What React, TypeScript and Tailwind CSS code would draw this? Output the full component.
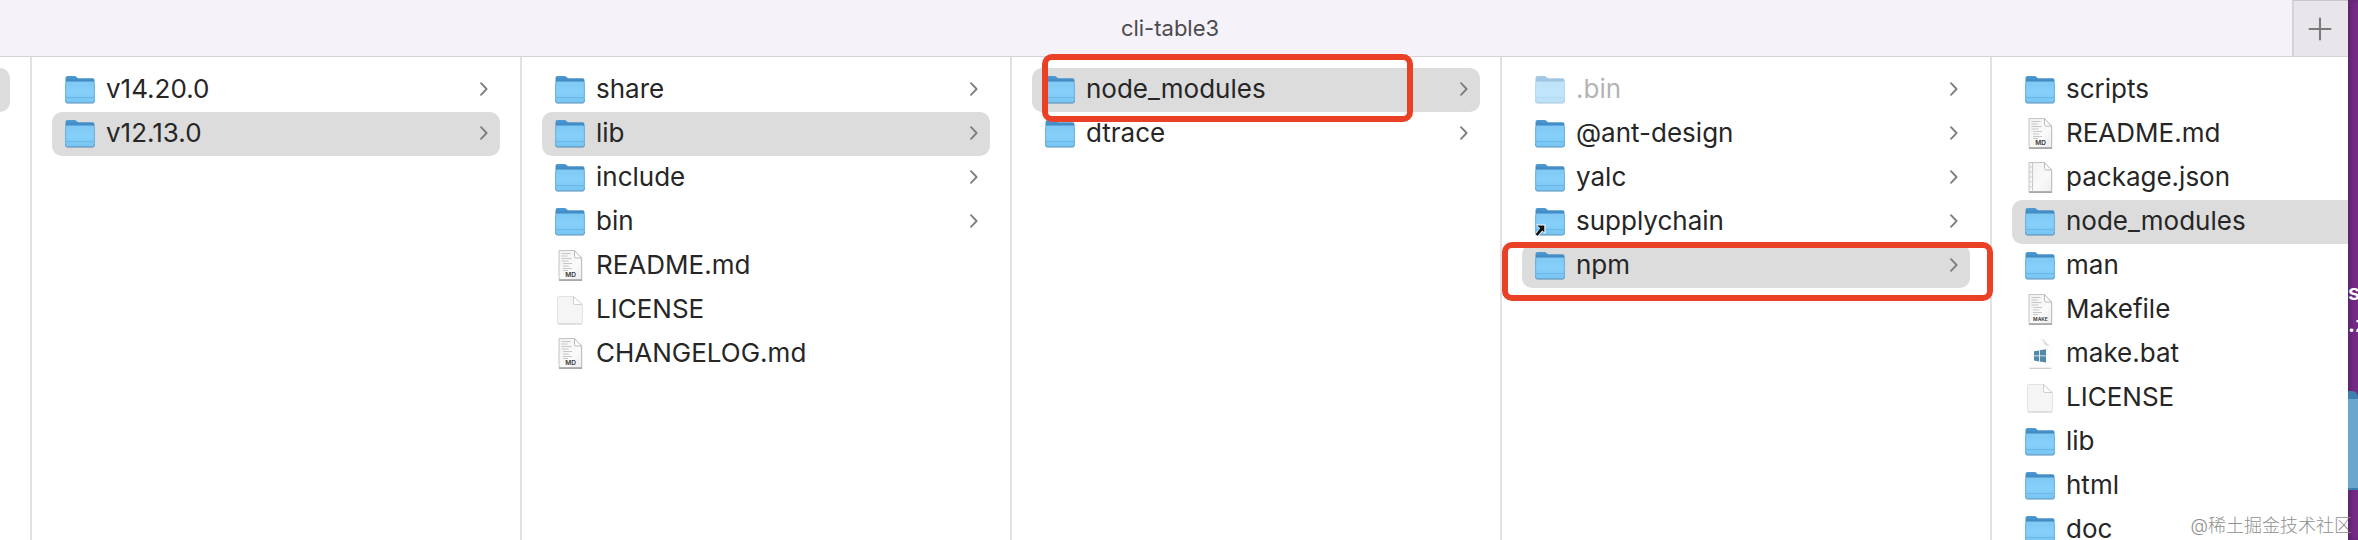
import { Plus } from 'lucide-react';

type IconKind = 'folder' | 'alias' | 'md' | 'make' | 'json' | 'bat' | 'blank';

interface Entry {
  name: string;
  icon: IconKind;
  selected?: boolean;
  hidden?: boolean;
  mark?: 'name' | 'row';
}

const columns: Entry[][] = [
  [
    { name: 'v14.20.0', icon: 'folder' },
    { name: 'v12.13.0', icon: 'folder', selected: true },
  ],
  [
    { name: 'share', icon: 'folder' },
    { name: 'lib', icon: 'folder', selected: true },
    { name: 'include', icon: 'folder' },
    { name: 'bin', icon: 'folder' },
    { name: 'README.md', icon: 'md' },
    { name: 'LICENSE', icon: 'blank' },
    { name: 'CHANGELOG.md', icon: 'md' },
  ],
  [
    { name: 'node_modules', icon: 'folder', selected: true, mark: 'name' },
    { name: 'dtrace', icon: 'folder' },
  ],
  [
    { name: '.bin', icon: 'folder', hidden: true },
    { name: '@ant-design', icon: 'folder' },
    { name: 'yalc', icon: 'folder' },
    { name: 'supplychain', icon: 'alias' },
    { name: 'npm', icon: 'folder', selected: true, mark: 'row' },
  ],
  [
    { name: 'scripts', icon: 'folder' },
    { name: 'README.md', icon: 'md' },
    { name: 'package.json', icon: 'json' },
    { name: 'node_modules', icon: 'folder', selected: true },
    { name: 'man', icon: 'folder' },
    { name: 'Makefile', icon: 'make' },
    { name: 'make.bat', icon: 'bat' },
    { name: 'LICENSE', icon: 'blank' },
    { name: 'lib', icon: 'folder' },
    { name: 'html', icon: 'folder' },
    { name: 'doc', icon: 'folder' },
  ],
];

const markStyles = {
  name: '-top-[14px] -bottom-[10px] left-[10px] right-[67px]',
  row: '-top-[2px] -bottom-[13px] -left-[20px] -right-[23px]',
};

function Gradients() {
  return (
    <svg className="absolute size-0" aria-hidden="true">
      <defs>
        <linearGradient id="folderBack" x1="0" y1="0" x2="0" y2="1">
          <stop offset="0" stopColor="#4f9bd3" />
          <stop offset="0.25" stopColor="#3d86c0" />
          <stop offset="1" stopColor="#5aa5da" />
        </linearGradient>
        <linearGradient id="folderFront" x1="0" y1="0" x2="0" y2="1">
          <stop offset="0" stopColor="#7fc8f3" />
          <stop offset="0.5" stopColor="#86d0fa" />
          <stop offset="1" stopColor="#78c4f1" />
        </linearGradient>
        <linearGradient id="paper" x1="0" y1="0" x2="1" y2="1">
          <stop offset="0" stopColor="#f1f1f1" />
          <stop offset="0.6" stopColor="#fafafa" />
          <stop offset="1" stopColor="#eeeeee" />
        </linearGradient>
      </defs>
    </svg>
  );
}

function FolderIcon({ alias }: { alias?: boolean }) {
  return (
    <svg viewBox="0 0 32 32" className="size-8 shrink-0" aria-hidden="true">
      <rect x="1.5" y="9" width="29" height="20.8" rx="2" fill="#000" opacity="0.18" />
      <path d="M1.5 4a2 2 0 0 1 2-2h6.8c1 0 1.5.3 2.2.9l.9.8c.5.4 1 .6 1.7.6h13.4a2 2 0 0 1 2 2V27h-29z" fill="url(#folderBack)" />
      <path d="M1.5 9.2a1.7 1.7 0 0 1 1.7-1.7h25.6a1.7 1.7 0 0 1 1.7 1.7v17.6a2 2 0 0 1-2 2h-25a2 2 0 0 1-2-2z" fill="url(#folderFront)" />
      <path d="M1.5 23.6h29" stroke="#64b2e2" strokeWidth="0.8" />
      <path d="M1.5 26.5v.4a2 2 0 0 0 2 2h25a2 2 0 0 0 2-2v-.4" fill="none" stroke="#4c9ace" strokeWidth="0.9" />
      <path d="M1.7 9v18M30.3 9v18" stroke="#5aa8da" strokeWidth="0.6" />
      {alias && (
        <g>
          <path d="M2 18.5h9.500v9.500l-3-2.500-4.500 5.300-3.500-2 5-6.300z" fill="#f4f8fb" />
          <path d="M3.300 19.500h7v6.800l-2-1.800-4.600 5.300-2.200-1.300 4.700-6.300z" fill="#111" />
        </g>
      )}
    </svg>
  );
}

function DocumentIcon({ kind }: { kind: 'md' | 'make' | 'json' }) {
  return (
    <svg viewBox="0 0 32 32" className="size-8 shrink-0" aria-hidden="true">
      <path d="M5 1.5h16l7.5 7.5v21.8H5z" fill="#000" opacity="0.12" />
      <path d="M5 .5h15.5l7 7.5v21.5H5z" fill="url(#paper)" stroke="#bdbdbd" strokeWidth="0.9" />
      <path d="M5 30.2h23" stroke="#8c8c8c" strokeWidth="1" />
      {kind === 'json' ? (
        <g>
          <path d="M8.5 1v28.5" stroke="#c9c9c9" strokeWidth="1" />
          <path d="M6.7 4v2m0 3v2m0 3v2m0 3v2m0 3v2" stroke="#c4c4c4" strokeWidth="0.8" />
        </g>
      ) : (
        <path
          d="M7.5 3.5h9M7.5 6h6M7.5 8.5h10M7.5 11h7M9 13.5h9M9 16h6M9 18.5h9M9 20.5h5"
          stroke="#c8c8c8"
          strokeWidth="1.2"
        />
      )}
      <path d="M20.5 .5V6.5a1.5 1.5 0 0 0 1.5 1.5h5.5z" fill="#fdfdfd" stroke="#b4b4b4" strokeWidth="0.9" />
      {kind !== 'json' && (
        <text
          x="16.5"
          y="27"
          textAnchor="middle"
          fontFamily="Inter, sans-serif"
          fontSize={kind === 'md' ? 6.5 : 5}
          fontWeight="600"
          fill="#333"
        >
          {kind === 'md' ? 'MD' : 'MAKE'}
        </text>
      )}
    </svg>
  );
}

function BlankIcon() {
  return (
    <svg viewBox="0 0 32 32" className="size-8 shrink-0" aria-hidden="true">
      <path d="M3.5 3.5a1 1 0 0 1 1-1H19.5l9 8.5v17.5a1.5 1.5 0 0 1-1.5 1.5H5a1.5 1.5 0 0 1-1.5-1.5z" fill="#f5f5f5" stroke="#e0e0e0" strokeWidth="0.9" />
      <path d="M4 29.9h24" stroke="#cccccc" strokeWidth="0.8" />
      <path d="M19.5 2.5v6.500a1.500 1.500 0 0 0 1.500 1.500h7z" fill="#fff" stroke="#c9c9c9" strokeWidth="0.9" />
    </svg>
  );
}

function BatIcon() {
  return (
    <svg viewBox="0 0 32 32" className="size-8 shrink-0" aria-hidden="true">
      <path d="M5 1h15l8 8v21H5z" fill="#fdfdfd" />
      <path d="M14 1.300c5 0 5.500 1.200 6 3.700.3 1.800 1.500 2.600 3.500 2.800 2 .2 2.700.8 3.500 1.800L19.500 1.300z" fill="#dedede" />
      <path d="M5.500 30.300h22" stroke="#c4c4c4" strokeWidth="1" />
      <path d="M10 13.200l5-.8v5.100h-5zM15.800 12.300l6.200-1v6.200h-6.200zM10 18.300h5v5.100l-5-.8zM15.800 18.300H22v6.200l-6.200-1z" fill="#4f8aa8" />
    </svg>
  );
}

function EntryIcon({ kind }: { kind: IconKind }) {
  if (kind === 'folder' || kind === 'alias') return <FolderIcon alias={kind === 'alias'} />;
  if (kind === 'blank') return <BlankIcon />;
  if (kind === 'bat') return <BatIcon />;
  return <DocumentIcon kind={kind} />;
}

function Row({ entry }: { entry: Entry }) {
  const isFolder = entry.icon === 'folder' || entry.icon === 'alias';

  return (
    <li className="relative">
      <button
        type="button"
        className={`flex h-11 w-full items-center rounded-[10px] px-3 text-left ${entry.selected ? 'bg-[#dcdcdc]' : ''}`}
      >
        <span className={`flex min-w-0 flex-1 items-center gap-[10px] ${entry.hidden ? 'opacity-50' : ''}`}>
          <EntryIcon kind={entry.icon} />
          <span className={`pb-0.5 text-[26px] leading-8 ${entry.hidden ? 'text-[#6a6a6a]' : 'text-[#262626]'}`}>{entry.name}</span>
        </span>
        {isFolder && (
          <svg viewBox="0 0 8 16" className="h-4 w-2 shrink-0" fill="none" aria-hidden="true">
            <path d="M1 1.200l5.600 5.800L1 12.800" stroke="#7d7d7d" strokeWidth="1.800" strokeLinecap="round" strokeLinejoin="round" />
          </svg>
        )}
      </button>
      {entry.mark && (
        <span className={`pointer-events-none absolute z-10 rounded-[10px] border-6 border-[#ea4025] ${markStyles[entry.mark]}`} />
      )}
    </li>
  );
}

function TabBar() {
  return (
    <header className="flex h-[57px] shrink-0 border-b border-[#d6d2d6] bg-[#f5f3f9]">
      <h1 className="flex flex-1 items-center justify-center pl-12 text-[22px] font-normal text-[#4c4a4e]">cli-table3</h1>
      <button
        type="button"
        aria-label="New tab"
        className="flex w-14 items-center justify-center border-t border-l-2 border-t-[#c9c6cb] border-l-[#d6d3d9] bg-[#e9e6eb] pr-0.5 text-[#7c7a7d]"
      >
        <Plus size={36} strokeWidth={1.4} />
      </button>
    </header>
  );
}

function Desktop() {
  return (
    <aside className="w-[10px] shrink-0 overflow-hidden bg-[#752b86] pt-[276px] shadow-[inset_3px_0_4px_rgba(0,0,0,0.2)]">
      <p className="text-[22px] leading-8 font-semibold text-white">s</p>
      <p className="text-[22px] leading-8 font-semibold text-white">.z</p>
      <div className="mt-[51px] h-[99px] rounded-tr-[6px] border-t-8 border-b-2 border-[#3d7fae] bg-[#6ba7cd]" />
    </aside>
  );
}

export default function App() {
  return (
    <div className="relative flex h-screen overflow-hidden bg-white font-['Inter','Noto_Sans_CJK_SC',sans-serif]">
      <Gradients />
      <main className="flex min-w-0 flex-1 flex-col overflow-hidden">
        <TabBar />
        <div className="flex min-h-0 flex-1">
          <section className="w-8 shrink-0 border-r-2 border-[#e2e2e2] pt-[11px]">
            <div className="h-11 w-[10px] rounded-r-[10px] bg-[#dcdcdc]" />
          </section>
          {columns.map((entries, index) => (
            <ul key={index} className="w-[490px] shrink-0 border-r-2 border-[#e2e2e2] px-5 pt-[11px]">
              {entries.map((entry) => (
                <Row key={entry.name} entry={entry} />
              ))}
            </ul>
          ))}
        </div>
      </main>
      <Desktop />
      <p className="absolute right-[6px] bottom-0 z-20 text-[18px] leading-7 font-light text-[#8f8f8f]">@稀土掘金技术社区</p>
    </div>
  );
}
